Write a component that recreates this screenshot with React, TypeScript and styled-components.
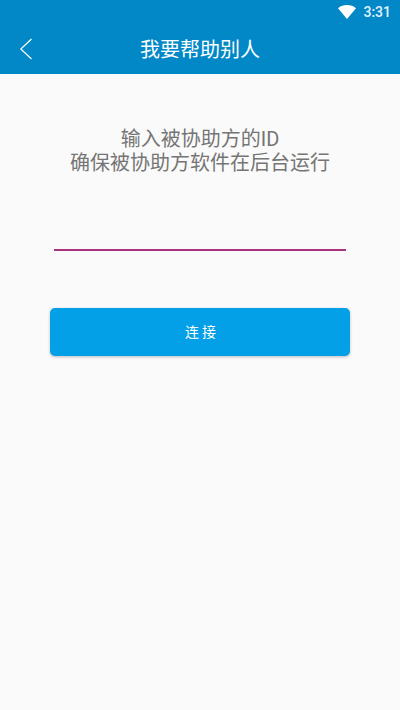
import styled, { createGlobalStyle } from 'styled-components';

const GlobalStyle = createGlobalStyle`
  html, body {
    margin: 0;
    padding: 0;
    background: #fafafa;
  }
  body {
    font-family: Roboto, "Noto Sans CJK SC", sans-serif;
  }
`;

const Page = styled.div`
  width: 400px;
  height: 710px;
  overflow: hidden;
  background: #fafafa;
  display: flex;
  flex-direction: column;
`;

const Header = styled.header`
  background: #0288c7;
  color: #fff;
`;

const StatusBar = styled.div`
  height: 24px;
  display: flex;
  align-items: center;
  justify-content: flex-end;
  gap: 7px;
  padding-right: 9px;
  font-size: 14px;
  font-weight: 500;
  color: #e3f3fb;
`;

const ToolBar = styled.div`
  height: 50px;
  display: flex;
  align-items: center;
  justify-content: center;
  position: relative;
`;

const BackButton = styled.div`
  position: absolute;
  left: 19px;
  top: 14px;
  width: 14px;
  height: 22px;
`;

const Title = styled.h1`
  margin: 0;
  padding-top: 2px;
  font-size: 20px;
  font-weight: 400;
  line-height: 28px;
`;

const Content = styled.main`
  display: flex;
  flex-direction: column;
  align-items: center;
  padding-top: 53px;
`;

const Hint = styled.p`
  margin: 0;
  font-size: 20px;
  line-height: 24px;
  color: #757575;
  text-align: center;
`;

const IdInput = styled.input`
  display: block;
  box-sizing: border-box;
  width: 292px;
  height: 30px;
  margin-top: 46px;
  padding: 0;
  border: 0;
  border-bottom: 2px solid #a8327f;
  background: transparent;
  outline: none;
`;

const ConnectButton = styled.button`
  width: 300px;
  height: 48px;
  margin-top: 57px;
  padding: 0 0 2px 4px;
  border: 0;
  border-radius: 5px;
  background: #03a0e8;
  color: #fff;
  font-family: inherit;
  font-size: 14px;
  letter-spacing: 3px;
  box-shadow: 0 1px 3px rgba(0, 0, 0, 0.25);
`;

export default function App() {
  return (
    <>
      <GlobalStyle />
      <Page>
        <Header>
          <StatusBar>
            <svg width="18" height="14" viewBox="0 0 18 14">
              <path d="M0 3.2C2.4 1.2 5.5 0 9 0s6.6 1.2 9 3.2L9 14z" fill="#fff" />
            </svg>
            <span>3:31</span>
          </StatusBar>
          <ToolBar>
            <BackButton>
              <svg width="14" height="22" viewBox="0 0 14 22">
                <path d="M12.5 1 1.8 11l10.7 10" fill="none" stroke="#fff" strokeWidth="1.2" />
              </svg>
            </BackButton>
            <Title>我要帮助别人</Title>
          </ToolBar>
        </Header>
        <Content>
          <Hint>
            输入被协助方的ID
            <br />
            确保被协助方软件在后台运行
          </Hint>
          <IdInput />
          <ConnectButton>连接</ConnectButton>
        </Content>
      </Page>
    </>
  );
}
